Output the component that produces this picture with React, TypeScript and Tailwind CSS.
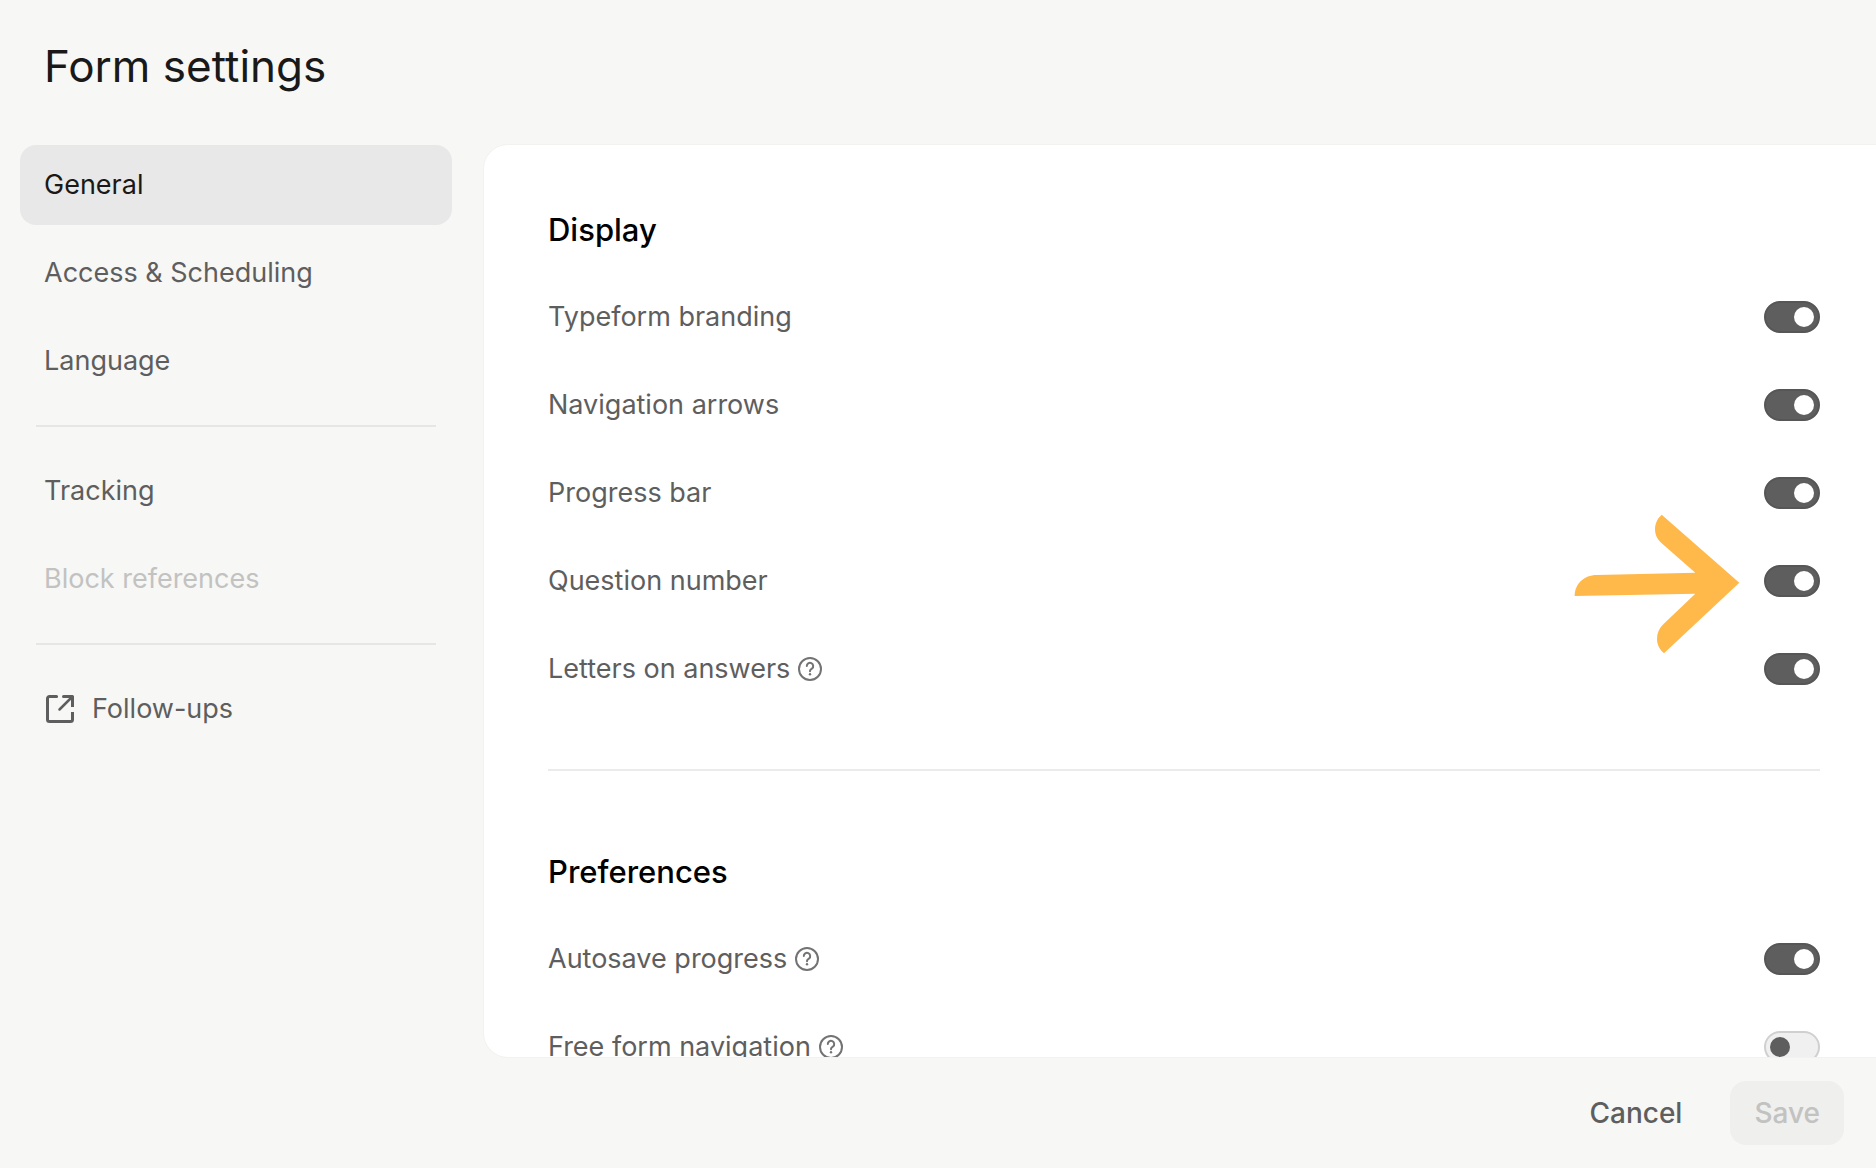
import { useState } from "react";
import clsx from "clsx";

type NavItem = { label: string; disabled?: boolean; external?: boolean };
type Setting = { id: string; label: string; help?: boolean; on: boolean; highlight?: boolean };

const navGroups: NavItem[][] = [
  [{ label: "General" }, { label: "Access & Scheduling" }, { label: "Language" }],
  [{ label: "Tracking" }, { label: "Block references", disabled: true }],
  [{ label: "Follow-ups", external: true }],
];

const sections: { title: string; settings: Setting[] }[] = [
  {
    title: "Display",
    settings: [
      { id: "branding", label: "Typeform branding", on: true },
      { id: "arrows", label: "Navigation arrows", on: true },
      { id: "progress", label: "Progress bar", on: true },
      { id: "number", label: "Question number", on: true, highlight: true },
      { id: "letters", label: "Letters on answers", help: true, on: true },
    ],
  },
  {
    title: "Preferences",
    settings: [
      { id: "autosave", label: "Autosave progress", help: true, on: true },
      { id: "freeform", label: "Free form navigation", help: true, on: false },
    ],
  },
];

function ExternalIcon() {
  return (
    <svg width="32" height="32" viewBox="-2 -2 32 32" fill="none" stroke="currentColor" strokeWidth="3" strokeLinecap="round" strokeLinejoin="round">
      <path d="M10.5 1.5H3.5a2 2 0 0 0-2 2v21a2 2 0 0 0 2 2h21a2 2 0 0 0 2-2V17" strokeLinecap="butt" />
      <path d="M10.5 1.5h.1M17.5 1.5h9" />
      <path d="M26.5 1.5V12" strokeLinecap="butt" />
      <path d="M26 2L13.5 14.5" strokeWidth="2.5" />
    </svg>
  );
}

function HelpIcon() {
  return (
    <svg width="24" height="24" viewBox="0 0 24 24" fill="none" stroke="currentColor" strokeWidth="2" strokeLinecap="round">
      <circle cx="12" cy="12" r="11" />
      <path d="M8.8 9a3.2 3.2 0 1 1 5.3 2.4c-1 .9-2.1 1.3-2.1 2.6v.3" />
      <circle cx="12" cy="17.3" r="1.2" fill="currentColor" stroke="none" />
    </svg>
  );
}

function PointerArrow() {
  return (
    <svg className="pointer-events-none absolute right-full top-1/2 mr-6 -translate-y-1/2" width="166" height="148" viewBox="0 0 166 148" fill="#ffb94a">
      <path d="M165.3 75.7L87.7 7.7C83 12 81 17 81 22.3C81 28 83.5 32.5 87.7 36.3L121.3 65.7L22.7 68C10 68 0.7 77 0.7 89L121.3 86.7L89.3 117.3C85 121.5 83 126.5 83 131.7C83 137.5 85.5 142.5 90 146.3Z" />
    </svg>
  );
}

function SettingRow({ setting }: { setting: Setting }) {
  const [on, setOn] = useState(setting.on);

  return (
    <div className="flex h-22 items-center justify-between">
      <div className="flex items-center gap-2 text-[#5e5e5e]">
        <label htmlFor={setting.id}>{setting.label}</label>
        {setting.help && (
          <button type="button" aria-label={`About ${setting.label}`} className="text-[#737373]">
            <HelpIcon />
          </button>
        )}
      </div>
      <div className="relative flex">
        {setting.highlight && <PointerArrow />}
        <input
          id={setting.id}
          type="checkbox"
          role="switch"
          checked={on}
          onChange={(e) => setOn(e.target.checked)}
          className="flex h-8 w-14 appearance-none items-center rounded-full border-2 border-[#d0d0d0] bg-[#f0f0f0] px-1 before:size-5 before:rounded-full before:bg-[#5e5e5e] checked:justify-end checked:border-[#565656] checked:bg-[#5e5e5e] checked:before:bg-white"
        />
      </div>
    </div>
  );
}

export default function App() {
  const [active, setActive] = useState("General");

  return (
    <div className="flex h-screen flex-col bg-[#f7f7f5] font-['Inter','Liberation_Sans',sans-serif] text-[27px] leading-10">
      <header className="px-11 pt-9 pb-12">
        <h1 className="text-[44px] leading-[61px] text-[#191919]">Form settings</h1>
      </header>

      <div className="flex min-h-0 flex-1 gap-8 pl-5">
        <nav className="w-[432px] shrink-0">
          {navGroups.map((group, i) => (
            <div key={i}>
              {i > 0 && <hr className="mx-4 my-6 border-t-2 border-[#e6e6e4]" />}
              <div className="flex flex-col gap-2">
                {group.map((item) => (
                  <button
                    key={item.label}
                    type="button"
                    disabled={item.disabled}
                    onClick={() => setActive(item.label)}
                    className={clsx(
                      "flex h-20 items-center gap-4 rounded-2xl px-6 text-left",
                      item.label === active && "bg-[#e8e8e8] text-[#191919]",
                      item.label !== active && !item.disabled && "text-[#5e5e5e]",
                      item.disabled && "text-[#c2c2c1]"
                    )}
                  >
                    {item.external && <ExternalIcon />}
                    {item.label}
                  </button>
                ))}
              </div>
            </div>
          ))}
        </nav>

        <main className="min-w-0 flex-1 overflow-hidden rounded-l-3xl bg-white pt-16 pr-14 pl-16 ring-1 ring-[#f2f2f0]">
          {sections.map((section, i) => (
            <section key={section.title}>
              {i > 0 && <hr className="mt-14 mb-20 border-t-2 border-[#ebebeb]" />}
              <h2 className="mb-[22px] text-[31px] leading-[42px] font-medium text-black">{section.title}</h2>
              {section.settings.map((setting) => (
                <SettingRow key={setting.id} setting={setting} />
              ))}
            </section>
          ))}
        </main>
      </div>

      <footer className="flex justify-end gap-6 px-8 pt-6 pb-[23px] text-[28px] font-medium">
        <button type="button" className="h-16 rounded-2xl px-6 text-[#5e5e5e]">
          Cancel
        </button>
        <button type="button" disabled className="h-16 rounded-2xl bg-[#efefee] px-6 text-[#c2c2c1]">
          Save
        </button>
      </footer>
    </div>
  );
}
